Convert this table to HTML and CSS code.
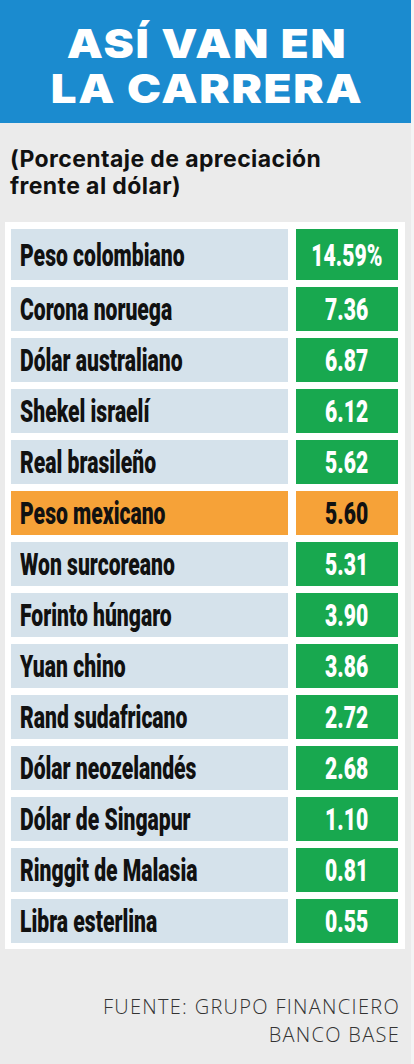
FILE: index.html
```html
<!DOCTYPE html>
<html>

<head>
    <meta charset="UTF-8">
    <title>Así van en la carrera</title>
    <link rel="stylesheet" href="styles.css">
</head>
<body>
    <div class="page">
        <header class="banner">
            <h1>ASÍ VAN EN<br>LA CARRERA</h1>
        </header>

        <p class="subtitle">(Porcentaje de apreciación<br>frente al dólar)</p>

        <div class="table">
            <div class="row first">
                <div class="name"><span>Peso colombiano</span></div>
                <div class="value"><span>14.59%</span></div>
            </div>
            <div class="row">
                <div class="name"><span>Corona noruega</span></div>
                <div class="value"><span>7.36</span></div>
            </div>
            <div class="row">
                <div class="name"><span>Dólar australiano</span></div>
                <div class="value"><span>6.87</span></div>
            </div>
            <div class="row">
                <div class="name"><span>Shekel israelí</span></div>
                <div class="value"><span>6.12</span></div>
            </div>
            <div class="row">
                <div class="name"><span>Real brasileño</span></div>
                <div class="value"><span>5.62</span></div>
            </div>
            <div class="row mx">
                <div class="name"><span>Peso mexicano</span></div>
                <div class="value"><span>5.60</span></div>
            </div>
            <div class="row">
                <div class="name"><span>Won surcoreano</span></div>
                <div class="value"><span>5.31</span></div>
            </div>
            <div class="row">
                <div class="name"><span>Forinto húngaro</span></div>
                <div class="value"><span>3.90</span></div>
            </div>
            <div class="row">
                <div class="name"><span>Yuan chino</span></div>
                <div class="value"><span>3.86</span></div>
            </div>
            <div class="row">
                <div class="name"><span>Rand sudafricano</span></div>
                <div class="value"><span>2.72</span></div>
            </div>
            <div class="row">
                <div class="name"><span>Dólar neozelandés</span></div>
                <div class="value"><span>2.68</span></div>
            </div>
            <div class="row">
                <div class="name"><span>Dólar de Singapur</span></div>
                <div class="value"><span>1.10</span></div>
            </div>
            <div class="row">
                <div class="name"><span>Ringgit de Malasia</span></div>
                <div class="value"><span>0.81</span></div>
            </div>
            <div class="row">
                <div class="name"><span>Libra esterlina</span></div>
                <div class="value"><span>0.55</span></div>
            </div>
        </div>

        <p class="source">FUENTE: GRUPO FINANCIERO<br>BANCO BASE</p>
    </div>
</body>

</html>
```

FILE: styles.css
```css
body {
    margin: 0;
    background: #f4f4f4;
}

.page {
    width: 411px;
    min-height: 1064px;
    background: #ebebeb;
}

.banner {
    height: 123px;
    box-sizing: border-box;
    padding: 8px 0 0 4px;
    background: #1b8bcf;
    display: flex;
    align-items: center;
    justify-content: center;
}

/* the wide heavy headline face isn't installed, so Inter Black is stretched a little */
.banner h1 {
    display: inline-block;
    margin: 0;
    color: #fff;
    font-family: Inter, "DejaVu Sans", sans-serif;
    font-weight: 900;
    font-size: 40px;
    line-height: 45px;
    letter-spacing: 1.5px;
    text-align: center;
    transform: scaleX(1.14);
}

.subtitle {
    margin: 23px 0 0 10px;
    font-family: Inter, "DejaVu Sans", sans-serif;
    font-weight: 700;
    font-size: 23px;
    line-height: 27px;
    letter-spacing: 0.4px;
    color: #111;
}

.table {
    margin: 22px 0 0 5px;
    width: 400px;
    box-sizing: border-box;
    padding: 7px 7px 6px 6px;
    background: #fff;
    display: flex;
    flex-direction: column;
    gap: 7px;
}

.row {
    display: grid;
    grid-template-columns: 277px 102px;
    gap: 8px;
    height: 44px;
    font-family: Roboto, "Liberation Sans", sans-serif;
    font-weight: 900;
    font-size: 32px;
}

.row.first {
    height: 51px;
}

.name {
    background: #d5e2eb;
    color: #111;
    display: flex;
    align-items: center;
    padding-left: 9px;
}

/* no condensed family available: squeeze the text */
.name span,
.value span {
    display: inline-block;
    transform: scaleX(0.66);
    transform-origin: left center;
    white-space: nowrap;
}

.value span {
    transform-origin: center;
}

.value {
    background: #18a84f;
    color: #fff;
    display: flex;
    align-items: center;
    justify-content: center;
}

.row.mx .name,
.row.mx .value {
    background: #f6a238;
    color: #111;
}

.source {
    margin: 44px 11px 0 0;
    text-align: right;
    font-family: "Open Sans", Lato, sans-serif;
    font-weight: 300;
    font-size: 20px;
    line-height: 28px;
    letter-spacing: 1.3px;
    color: #333;
}
```
